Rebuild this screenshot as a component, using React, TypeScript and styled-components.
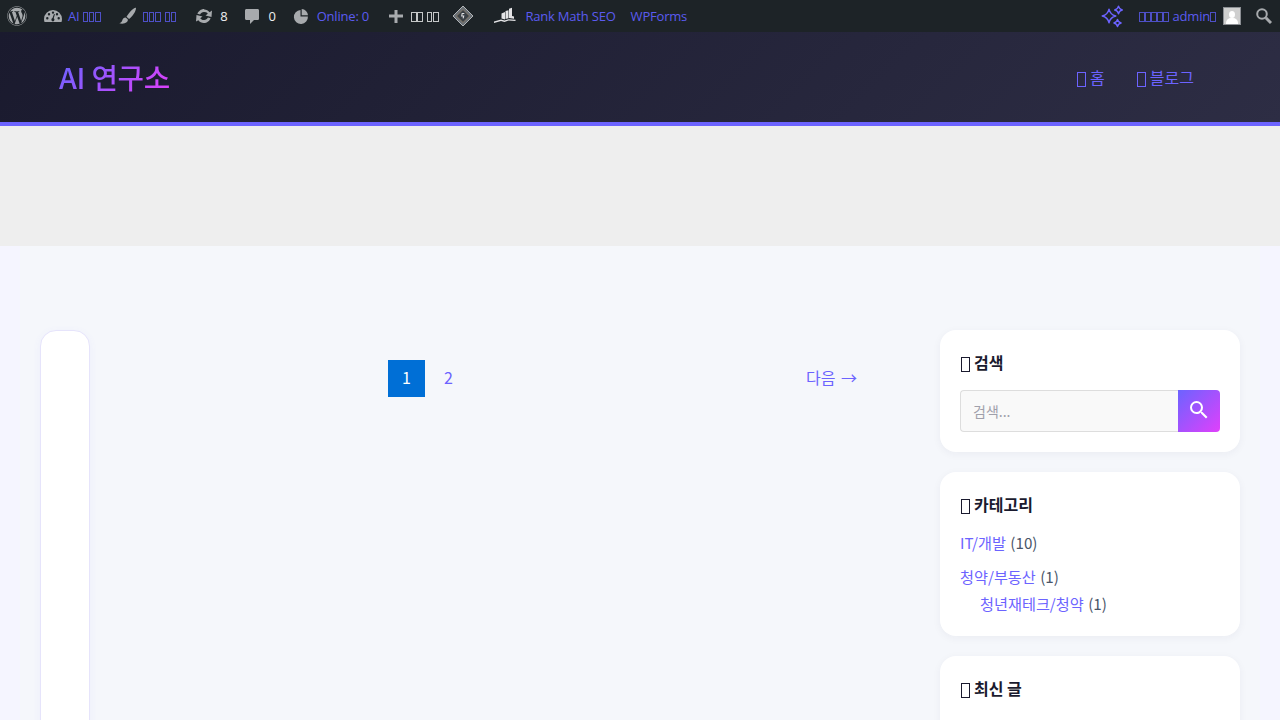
import React from "react";
import styled, { createGlobalStyle } from "styled-components";
import { FaWordpress } from "react-icons/fa";

const Global = createGlobalStyle`
  html, body { margin: 0; padding: 0; height: 720px; overflow: hidden; background: #f5f5ff; }
  * { box-sizing: border-box; }
  body { font-family: "Noto Sans CJK KR", "Noto Sans", sans-serif; font-size: 16px; }
  a { text-decoration: none; }
`;

/* The reference shows missing-glyph boxes; each one is drawn as a small outlined box */
const BarTofu = styled.span<{ $tight?: boolean }>`
  display: inline-block;
  width: 5.5px;
  height: 10px;
  margin-right: ${(p) => (p.$tight ? 0.5 : 0.8)}px;
  border: 1px solid currentColor;
  opacity: 0.8;
  vertical-align: -1px;
`;
const BigTofu = styled.span`
  display: inline-block;
  width: 9px;
  height: 15px;
  margin: 0 4px 0 1px;
  border: 1px solid currentColor;
  vertical-align: -3px;
`;

const AdminBar = styled.div`
  height: 32px;
  background: #1d2327;
  display: flex;
  align-items: center;
  justify-content: space-between;
  font-family: "Open Sans", "Noto Sans", sans-serif;
  font-size: 13px;
  color: #f0f0f1;
`;
const BarGroup = styled.div`
  display: flex;
  align-items: center;
  height: 32px;
`;
const BarItem = styled.a<{ $left?: number; $gap?: number; $white?: boolean }>`
  display: flex;
  align-items: center;
  height: 32px;
  margin-left: ${(p) => p.$left ?? 0}px;
  gap: ${(p) => p.$gap ?? 6}px;
  color: ${(p) => (p.$white ? "#f0f0f1" : "#5b5bf0")};
  white-space: nowrap;
  letter-spacing: -0.2px;
  svg { flex: none; display: block; }
`;
const BarLabel = styled.span`
  display: block;
`;
const Avatar = styled.span`
  width: 18px;
  height: 18px;
  border: 1px solid #8c8f94;
  background: #cfcfcf;
  display: block;
  position: relative;
  overflow: hidden;
  &::before { content: ""; position: absolute; left: 5px; top: 3px; width: 6px; height: 7px; border-radius: 50%; background: #fff; }
  &::after { content: ""; position: absolute; left: 2px; top: 10px; width: 12px; height: 8px; border-radius: 5px 5px 0 0; background: #fff; }
`;

const Header = styled.header`
  height: 94px;
  background: linear-gradient(135deg, #1a1a2e, #2d2d44);
  border-bottom: 4px solid #6c63ff;
  display: flex;
  align-items: center;
  justify-content: space-between;
  padding: 0 86px 0 59px;
`;
const Logo = styled.a`
  font-size: 28.8px;
  font-weight: 500;
  line-height: 1;
  letter-spacing: -0.3px;
  background: linear-gradient(135deg, #6c63ff, #e040fb);
  -webkit-background-clip: text;
  background-clip: text;
  color: transparent;
  margin-top: 1px;
`;
const Nav = styled.nav`
  display: flex;
  gap: 31px;
  align-items: center;
`;
const NavLink = styled.a`
  color: #6c63ff;
  font-size: 16px;
  display: block;
  line-height: 24px;
  margin-top: -1px;
`;
const Banner = styled.div`
  height: 120px;
  background: #eeeeee;
`;
const Page = styled.div`
  margin: 0 20px;
  height: 474px;
  background: #f5f7fb;
  padding: 84px 20px 0 20px;
  display: flex;
  overflow: hidden;
`;
const NarrowCard = styled.div`
  width: 50px;
  height: 500px;
  background: #fff;
  border: 1px solid #e6e4fb;
  border-radius: 16px;
  flex: none;
  box-shadow: 0 2px 8px rgba(108, 99, 255, 0.06);
`;
const Main = styled.main`
  flex: 1;
  height: 67px;
  padding: 30px 83px 0 298px;
  display: flex;
  align-items: flex-start;
`;
const PageNum = styled.a<{ $active?: boolean }>`
  width: 37px;
  height: 37px;
  padding-bottom: 3px;
  display: flex;
  align-items: center;
  justify-content: center;
  font-size: 16px;
  color: ${(p) => (p.$active ? "#fff" : "#6c63ff")};
  background: ${(p) => (p.$active ? "#006fd6" : "transparent")};
  margin-right: 5px;
`;
const NextLink = styled.a`
  margin-left: auto;
  height: 37px;
  line-height: 35px;
  font-size: 16px;
  word-spacing: 2px;
  color: #6c63ff;
`;
const Sidebar = styled.aside`
  width: 300px;
  flex: none;
  display: flex;
  flex-direction: column;
  gap: 20px;
`;
const Widget = styled.section`
  background: #fff;
  border-radius: 16px;
  padding: 20px;
  box-shadow: 0 2px 8px rgba(30, 30, 80, 0.05);
`;
const WidgetTitle = styled.h3<{ $gap?: number }>`
  margin: 0 0 ${(p) => p.$gap ?? 15}px;
  font-size: 16px;
  font-weight: 700;
  line-height: 25px;
  color: #1a1a2e;
`;
const SearchRow = styled.form`
  display: flex;
  height: 42px;
  margin: 0;
`;
const SearchInput = styled.input`
  flex: 1;
  min-width: 0;
  border: 1px solid #dddddd;
  border-right: none;
  border-radius: 4px 0 0 4px;
  background: #f9f9f9;
  padding: 0 12px;
  font-family: inherit;
  font-size: 14px;
  &::placeholder { color: #a0a0ab; opacity: 1; }
`;
const SearchButton = styled.button`
  width: 42px;
  border: none;
  padding: 0 0 2px;
  border-radius: 0 4px 4px 0;
  background: linear-gradient(135deg, #6c63ff, #e040fb);
  display: flex;
  align-items: center;
  justify-content: center;
`;
const CatList = styled.ul`
  list-style: none;
  margin: 0 0 -1px;
  padding: 0;
  font-size: 15.2px;
  color: #4a5568;
`;
const CatItem = styled.li<{ $indent?: boolean; $tight?: boolean }>`
  line-height: 27px;
  margin-bottom: ${(p) => (p.$indent || p.$tight ? 0 : 7)}px;
  padding-left: ${(p) => (p.$indent ? 20 : 0)}px;
  word-spacing: 1px;
  a { color: #6c63ff; }
`;

const ICON = "#a7aaad";

const Gauge = () => (
  <svg width="20" height="20" viewBox="0 0 20 20" fill={ICON}>
    <path
      fillRule="evenodd"
      d="M10 4a9 9 0 0 0-9 9c0 1.100.2 2.100.5 3h17c.3-.9.5-1.900.5-3a9 9 0 0 0-9-9zM4.300 13.500a1.200 1.200 0 1 1 0-2.400 1.200 1.200 0 0 1 0 2.400zM6 9.500a1.200 1.200 0 1 1 0-2.400 1.200 1.200 0 0 1 0 2.400zM10 7.800a1.200 1.200 0 1 1 0-2.400 1.200 1.200 0 0 1 0 2.400zM14 9.500a1.200 1.200 0 1 1 0-2.400 1.200 1.200 0 0 1 0 2.400zM15.700 13.500a1.200 1.200 0 1 1 0-2.400 1.200 1.200 0 0 1 0 2.400zM10 15.400a1.700 1.700 0 0 1-.5-3.300l1.500-4.200.9.300-1.200 4.100a1.700 1.700 0 0 1-.7 3.100z"
    />
  </svg>
);
const Brush = () => (
  <svg width="20" height="20" viewBox="0 0 20 20" fill={ICON}>
    <path d="M17.800 1.800c-.7-.5-2.400.7-4 2.300-1.900 1.900-3.900 4.400-5.300 6.700l2.600 2.200c2.300-2 4.600-4.800 5.800-7.100.9-1.800 1.400-3.600.9-4.100zM7.600 11.500c-1.700 0-2.900 1.100-3.300 2.800-.3 1.200-1.200 2.400-3 3 2.600.7 5.700.4 7.300-1 1.200-1 1.600-2.500.9-3.400z" />
  </svg>
);
const Updates = () => (
  <svg width="20" height="20" viewBox="0 0 20 20" fill={ICON}>
    <path d="M10.200 3.500c2.200 0 4.200 1.100 5.400 2.800L18 4.500l-.5 6.500-6-1.500 2.300-1.700a4.500 4.500 0 0 0-7.700.7l-2.700-.7c.9-2.600 3.600-4.800 6.800-4.800zM2.500 9l6 1.500-2.300 1.700a4.500 4.500 0 0 0 7.700-.7l2.700.7c-.9 2.600-3.600 4.800-6.800 4.800-2.200 0-4.200-1.100-5.400-2.800L2 15.500z" />
  </svg>
);
const Comment = () => (
  <svg width="20" height="20" viewBox="0 0 20 20" fill={ICON}>
    <path d="M4.500 3h11c1 0 1.500.6 1.500 1.500v8c0 1-.6 1.500-1.500 1.500H12l-4 4v-4H4.500C3.600 14 3 13.400 3 12.500v-8C3 3.600 3.600 3 4.500 3z" />
  </svg>
);
const Pie = () => (
  <svg width="20" height="20" viewBox="0 0 20 20" fill={ICON}>
    <path d="M10.700 3v6.300H17A6.800 6.800 0 0 0 10.700 3zM9.500 4a7 7 0 1 0 7.400 6.500H9.500z" />
  </svg>
);
const Plus = () => (
  <svg width="20" height="20" viewBox="0 0 20 20" fill={ICON}>
    <path d="M8.500 4h3v4.500H17v3h-5.500V17h-3v-5.500H3v-3h5.500z" />
  </svg>
);
const Diamond = () => (
  <svg width="22" height="22" viewBox="0 0 22 22" fill="none">
    <path d="M11 1 21 11 11 21 1 11z" fill="#6a7076" stroke="#b0b3b6" strokeWidth="1" />
    <path d="M11 4.500 17.500 11 11 17.500 4.500 11z" fill="#3a4046" stroke="#8f7f6a" strokeWidth=".8" />
    <path d="M12.300 8.500H10.200L9.700 11h2l-.6 2.400" stroke="#dcdcde" strokeWidth="1.100" />
  </svg>
);
const RankMath = () => (
  <svg width="22" height="20" viewBox="0 0 22 20" fill="#e4e4e6">
    <path d="M0 15.500 7 13.500l3.500 1 4-1.200 7 .4v1.200l-7-.3-4 1.400-3.500-1L0 17zM7.500 12.500V7.500L11 6v7.500zM11.500 13V5l3-.7V12.300zM15 12V2.800l3-1V10l2 .4V12.800z" />
  </svg>
);
const star = (cx: number, cy: number, r: number) =>
  `M${cx} ${cy - r}Q${cx + r * 0.18} ${cy - r * 0.18} ${cx + r} ${cy}Q${cx + r * 0.18} ${cy + r * 0.18} ${cx} ${cy + r}Q${cx - r * 0.18} ${cy + r * 0.18} ${cx - r} ${cy}Q${cx - r * 0.18} ${cy - r * 0.18} ${cx} ${cy - r}Z`;
const Sparkles = () => (
  <svg width="22" height="24" viewBox="0 0 22 24" fill="none" stroke="#6c63ff" strokeWidth="1.400" strokeLinejoin="round">
    <path d={star(8, 12, 6.800)} />
    <path d={star(17.500, 6, 3.800)} />
    <path d={star(16.500, 19, 3.600)} />
  </svg>
);
const BarSearch = () => (
  <svg width="20" height="20" viewBox="0 0 20 20" fill="none" stroke={ICON} strokeWidth="2">
    <circle cx="8" cy="8" r="4.800" />
    <path d="M11.800 11.800 17 17" strokeWidth="3" />
  </svg>
);
const SearchIcon = () => (
  <svg width="24" height="24" viewBox="0 0 24 24" fill="#fff">
    <path d="M15.500 14h-.79l-.28-.27A6.470 6.470 0 0 0 16 9.500 6.500 6.500 0 1 0 9.500 16c1.610 0 3.090-.59 4.230-1.570l.27.28v.79l5 4.990L20.490 19l-4.990-5zm-6 0C7.010 14 5 11.990 5 9.500S7.010 5 9.500 5 14 7.010 14 9.500 11.990 14 9.500 14z" />
  </svg>
);

const Tofus = ({ n, tight }: { n: number; tight?: boolean }) => (
  <>
    {Array.from({ length: n }, (_, i) => (
      <BarTofu key={i} $tight={tight} />
    ))}
  </>
);

export default function App() {
  return (
    <>
      <Global />
      <AdminBar>
        <BarGroup>
          <BarItem $left={7}><FaWordpress size={20} color={ICON} /></BarItem>
          <BarItem $left={16} $gap={5}><Gauge /><BarLabel>AI <Tofus n={3} /></BarLabel></BarItem>
          <BarItem $left={16} $gap={5}><Brush /><BarLabel><Tofus n={3} /> <Tofus n={2} /></BarLabel></BarItem>
          <BarItem $left={17} $gap={6} $white><Updates /><BarLabel>8</BarLabel></BarItem>
          <BarItem $left={15} $gap={6} $white><Comment /><BarLabel>0</BarLabel></BarItem>
          <BarItem $left={15} $gap={6}><Pie /><BarLabel>Online: 0</BarLabel></BarItem>
          <BarItem $left={17} $gap={5} $white><Plus /><BarLabel><Tofus n={2} /> <Tofus n={2} /></BarLabel></BarItem>
          <BarItem $left={13}><Diamond /></BarItem>
          <BarItem $left={20} $gap={9}><RankMath /><BarLabel>Rank Math SEO</BarLabel></BarItem>
          <BarItem $left={15}><BarLabel>WPForms</BarLabel></BarItem>
        </BarGroup>
        <BarGroup>
          <BarItem><Sparkles /></BarItem>
          <BarItem $left={16} $gap={7}><BarLabel><Tofus n={5} tight /> admin<Tofus n={1} tight /></BarLabel><Avatar /></BarItem>
          <BarItem $left={13}><BarSearch /></BarItem>
          <BarItem $left={6} />
        </BarGroup>
      </AdminBar>
      <Header>
        <Logo>AI 연구소</Logo>
        <Nav>
          <NavLink><BigTofu />홈</NavLink>
          <NavLink><BigTofu />블로그</NavLink>
        </Nav>
      </Header>
      <Banner />
      <Page>
        <NarrowCard />
        <Main>
          <PageNum $active>1</PageNum>
          <PageNum>2</PageNum>
          <NextLink>다음 →</NextLink>
        </Main>
        <Sidebar>
          <Widget>
            <WidgetTitle><BigTofu />검색</WidgetTitle>
            <SearchRow>
              <SearchInput placeholder="검색..." />
              <SearchButton type="button"><SearchIcon /></SearchButton>
            </SearchRow>
          </Widget>
          <Widget>
            <WidgetTitle $gap={12}><BigTofu />카테고리</WidgetTitle>
            <CatList>
              <CatItem><a>IT/개발</a> (10)</CatItem>
              <CatItem $tight><a>청약/부동산</a> (1)</CatItem>
              <CatItem $indent><a>청년재테크/청약</a> (1)</CatItem>
            </CatList>
          </Widget>
          <Widget>
            <WidgetTitle><BigTofu />최신 글</WidgetTitle>
          </Widget>
        </Sidebar>
      </Page>
    </>
  );
}
